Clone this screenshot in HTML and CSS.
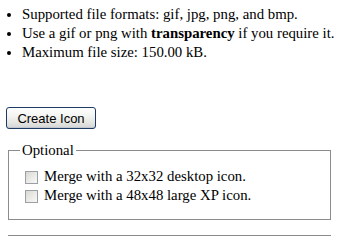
FILE: index.html
```html
<!DOCTYPE html>
<html>
<head>
<meta charset="utf-8">
<link rel="stylesheet" href="styles.css">
</head>
<body>
<div class="page">
  <ul class="notes">
    <li>Supported file formats: gif, jpg, png, and bmp.</li>
    <li>Use a gif or png with <b>transparency</b> if you require it.</li>
    <li>Maximum file size: 150.00 kB.</li>
  </ul>
  <div class="actions">
    <button class="btn" type="button">Create Icon</button>
  </div>
  <fieldset class="opts">
    <legend class="opts-title">Optional</legend>
    <label class="opt"><span class="box"></span>Merge with a 32x32 desktop icon.</label>
    <label class="opt"><span class="box"></span>Merge with a 48x48 large XP icon.</label>
  </fieldset>
  <div class="rule"></div>
</div>
</body>
</html>
```

FILE: styles.css
```css
html, body {
  margin: 0;
  padding: 0;
  background: #fff;
}
.page {
  width: 345px;
  height: 240px;
  overflow: hidden;
  font-family: "Liberation Serif", Tinos, "Times New Roman", Times, serif;
  font-size: 14.8px;
  line-height: 19px;
  color: #000;
}
.notes {
  margin: 5px 0 0 0;
  padding: 0 0 0 22px;
  list-style: disc;
  white-space: nowrap;
}
.notes b {
  font-weight: bold;
}
.actions {
  margin-top: 45px;
  padding-left: 6px;
  display: flex;
}
.btn {
  width: 90px;
  height: 22px;
  margin: 0;
  padding: 0;
  font-family: "Liberation Sans", Arial, sans-serif;
  font-size: 13px;
  color: #000;
  border: 1px solid #1c3b63;
  border-radius: 3px;
  background: linear-gradient(#ffffff 0%, #f4f4f2 40%, #e4e4e0 75%, #d2d4d8 100%);
  box-shadow: inset 0 -1px 0 #c4c8cc;
}
.opts {
  margin: 12px 0 0 8px;
  width: 323px;
  box-sizing: border-box;
  border: 1px solid #8c8c8c;
  padding: 7px 0 14px 11px;
  font: inherit;
}
.opts-title {
  padding: 0 2px;
  line-height: 19px;
}
.opt {
  display: flex;
  align-items: center;
  height: 19px;
  padding-left: 5px;
  white-space: nowrap;
}
.box {
  flex: none;
  width: 13px;
  height: 13px;
  box-sizing: border-box;
  border: 1px solid #9aa0a6;
  background: linear-gradient(135deg, #d8d8d2 0%, #ececea 60%, #f8f8f6 100%);
  margin-right: 6px;
  margin-top: 1px;
}
.rule {
  margin: 15px 0 0 8px;
  width: 323px;
  height: 1px;
  background: #8a8a8a;
}
```
